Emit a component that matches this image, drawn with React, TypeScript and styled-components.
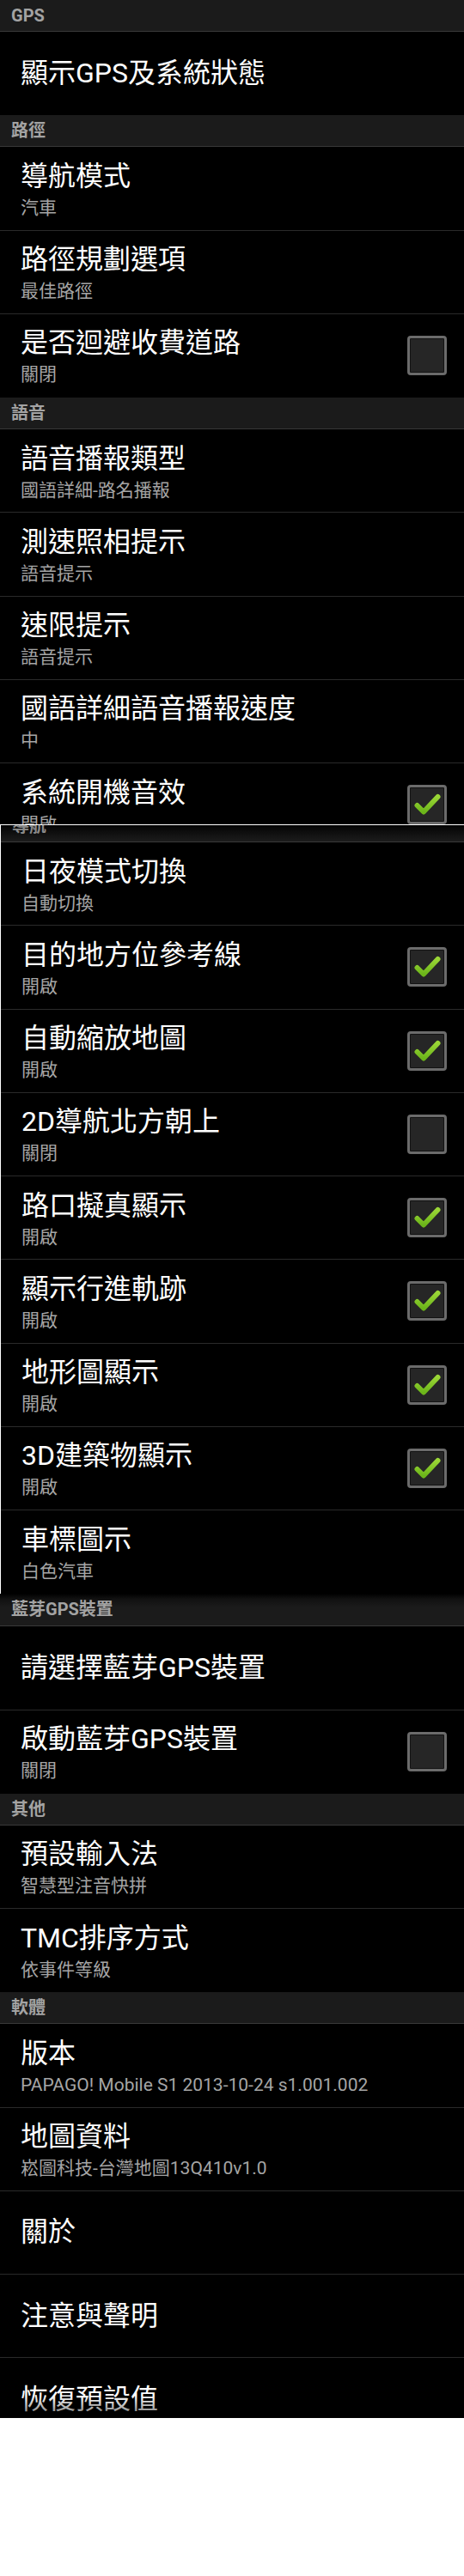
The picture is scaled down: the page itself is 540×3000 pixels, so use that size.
import React from 'react';
import styled, { createGlobalStyle, css } from 'styled-components';

const GlobalStyle = createGlobalStyle`
  html, body { margin: 0; padding: 0; background: #ffffff; }
  body { font-family: Roboto, "Noto Sans CJK TC", sans-serif; }
`;

const Page = styled.div`
  width: 540px;
  background: #000;
  display: flex;
  flex-direction: column;
`;

const Shot = styled.div`
  display: flex;
  flex-direction: column;
  border-top: 1px solid #ffffff;
  border-left: 1px solid #ffffff;
`;

type HeaderKind = 'plain' | 'fade' | 'clip';

const Header = styled.div<{ $kind?: HeaderKind }>`
  flex: none;
  height: 36px;
  border-bottom: 1px solid #393939;
  padding-left: 13px;
  font: 700 20px/36px Roboto, "Noto Sans CJK TC", sans-serif;
  color: #a3a3a3;
  background: #1b1b1b;
  ${p => p.$kind === 'fade' && css`
    height: 37px;
    line-height: 37px;
    background: linear-gradient(#000 0px, #111 6px, #1b1b1b 16px);
  `}
  ${p => p.$kind === 'clip' && css`
    margin-top: -17px;
    color: #8a8a8a;
    background: linear-gradient(#000 0px, #050505 18px, #1c1c1c 36px);
  `}
`;

const Clip = styled.div<{ $h: number; $fade?: boolean }>`
  flex: none;
  position: relative;
  height: ${p => p.$h}px;
  overflow: hidden;
  ${p => p.$fade && css`
    &::after {
      content: '';
      position: absolute;
      left: 0;
      right: 0;
      bottom: 0;
      height: 26px;
      background: linear-gradient(rgba(0, 0, 0, 0), rgba(0, 0, 0, 0.6));
    }
  `}
`;

const Row = styled.div<{ $last?: boolean }>`
  flex: none;
  box-sizing: border-box;
  height: 97.25px;
  display: flex;
  align-items: center;
  padding: 0 20px 0 24px;
  border-bottom: 1px solid ${p => (p.$last ? 'transparent' : '#2a2a2a')};
`;

const Texts = styled.div`
  flex: 1;
  min-width: 0;
  display: flex;
  flex-direction: column;
`;

const Title = styled.div`
  font-size: 32px;
  line-height: 45px;
  color: #ffffff;
  white-space: nowrap;
`;

const Summary = styled.div`
  font-size: 21px;
  line-height: 28px;
  color: #a5a5a5;
  white-space: nowrap;
`;

const Box = styled.span`
  flex: none;
  box-sizing: border-box;
  width: 46px;
  height: 46px;
  border: 3px solid #6b6b6b;
  border-radius: 4px;
  background: #262626;
  box-shadow: inset 0 0 0 1px #121212;
  display: flex;
  align-items: center;
  justify-content: center;
`;

const CheckBox: React.FC<{ on: boolean }> = ({ on }) => (
  <Box>
    {on && (
      <svg width="40" height="40" viewBox="0 0 40 40">
        <defs>
          <linearGradient id="ck" x1="0" y1="0" x2="0" y2="1">
            <stop offset="0" stopColor="#9ad636" />
            <stop offset="1" stopColor="#6cb51a" />
          </linearGradient>
        </defs>
        <polyline
          points="8.5,21 16,28.5 32.5,11"
          fill="none"
          stroke="url(#ck)"
          strokeWidth="6"
          strokeLinecap="round"
          strokeLinejoin="round"
        />
      </svg>
    )}
  </Box>
);

type Item = { t: string; s?: string; c?: boolean; last?: boolean };

const Pref: React.FC<{ item: Item }> = ({ item }) => (
  <Row $last={item.last}>
    <Texts>
      <Title>{item.t}</Title>
      {item.s && <Summary>{item.s}</Summary>}
    </Texts>
    {item.c !== undefined && <CheckBox on={item.c} />}
  </Row>
);

const List: React.FC<{ items: Item[] }> = ({ items }) => (
  <>
    {items.map((it, i) => (
      <Pref key={i} item={{ ...it, last: i === items.length - 1 ? true : it.last }} />
    ))}
  </>
);

export default function App() {
  return (
    <>
      <GlobalStyle />
      <Page>
        <Header>GPS</Header>
        <List items={[{ t: '顯示GPS及系統狀態' }]} />
        <Header>路徑</Header>
        <List
          items={[
            { t: '導航模式', s: '汽車' },
            { t: '路徑規劃選項', s: '最佳路徑' },
            { t: '是否迴避收費道路', s: '關閉', c: false },
          ]}
        />
        <Header>語音</Header>
        <Pref item={{ t: '語音播報類型', s: '國語詳細-路名播報' }} />
        <Pref item={{ t: '測速照相提示', s: '語音提示' }} />
        <Pref item={{ t: '速限提示', s: '語音提示' }} />
        <Pref item={{ t: '國語詳細語音播報速度', s: '中' }} />
        <Clip $h={71}>
          <Pref item={{ t: '系統開機音效', s: '開啟', c: true }} />
        </Clip>

        <Shot>
          <Clip $h={20}>
            <Header $kind="clip">導航</Header>
          </Clip>
          <List
            items={[
              { t: '日夜模式切換', s: '自動切換' },
              { t: '目的地方位參考線', s: '開啟', c: true },
              { t: '自動縮放地圖', s: '開啟', c: true },
              { t: '2D導航北方朝上', s: '關閉', c: false },
              { t: '路口擬真顯示', s: '開啟', c: true },
              { t: '顯示行進軌跡', s: '開啟', c: true },
              { t: '地形圖顯示', s: '開啟', c: true },
              { t: '3D建築物顯示', s: '開啟', c: true },
              { t: '車標圖示', s: '白色汽車' },
            ]}
          />
        </Shot>

        <Header $kind="fade">藍芽GPS裝置</Header>
        <List
          items={[
            { t: '請選擇藍芽GPS裝置' },
            { t: '啟動藍芽GPS裝置', s: '關閉', c: false },
          ]}
        />
        <Header>其他</Header>
        <List
          items={[
            { t: '預設輸入法', s: '智慧型注音快拼' },
            { t: 'TMC排序方式', s: '依事件等級' },
          ]}
        />
        <Header>軟體</Header>
        <Pref item={{ t: '版本', s: 'PAPAGO! Mobile S1 2013-10-24 s1.001.002' }} />
        <Pref item={{ t: '地圖資料', s: '崧圖科技-台灣地圖13Q410v1.0' }} />
        <Pref item={{ t: '關於' }} />
        <Pref item={{ t: '注意與聲明' }} />
        <Clip $h={70} $fade>
          <Pref item={{ t: '恢復預設值' }} />
        </Clip>
      </Page>
    </>
  );
}
